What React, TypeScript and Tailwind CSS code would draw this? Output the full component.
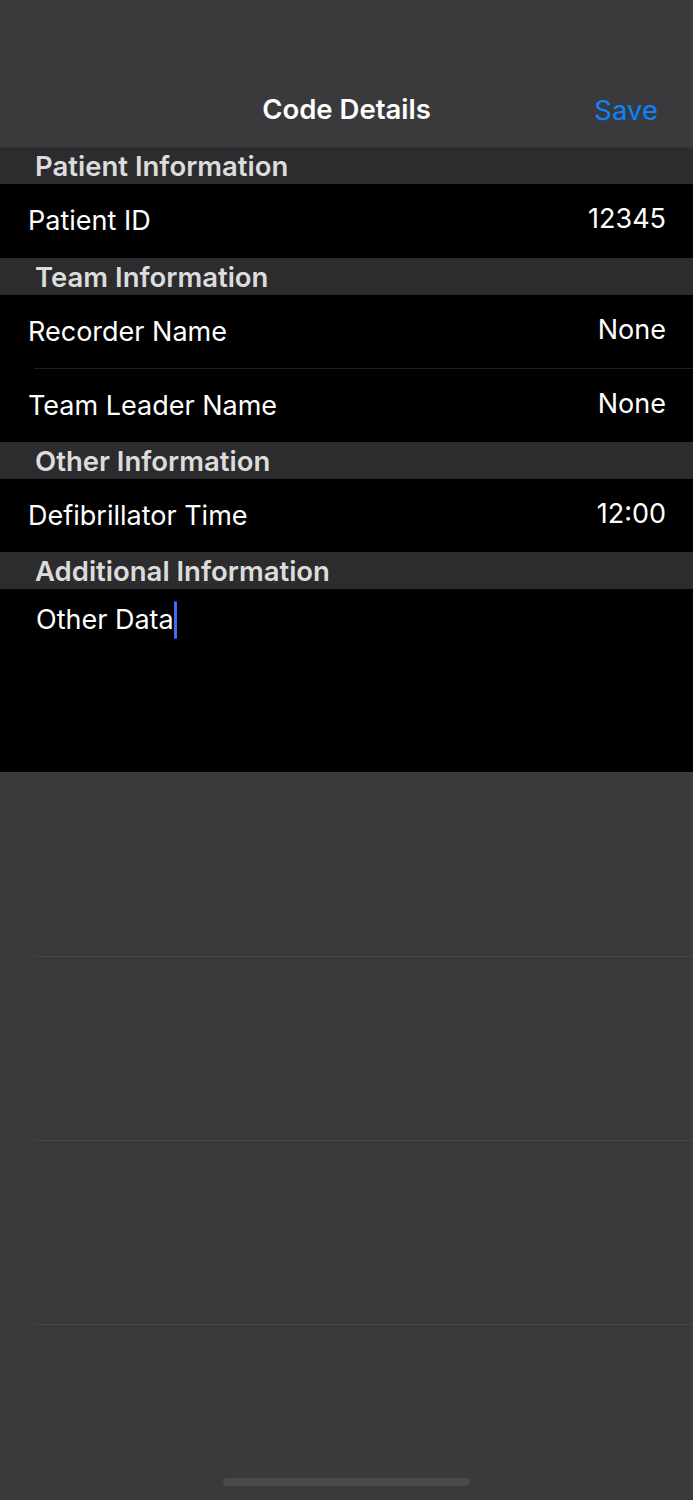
import React from "react";

const font = { fontFamily: "Inter, 'Noto Sans', sans-serif" };

function SectionHeader({ title, h }: { title: string; h: string }) {
  return (
    <div className={`${h} bg-[#2c2c2e] pl-[35px] flex items-center`}>
      <span className="text-[27.5px] font-semibold text-[#dcdcdc] leading-none mt-[2px]">{title}</span>
    </div>
  );
}

function Row({ label, value, sep, h }: { label: string; value: string; sep?: boolean; h: string }) {
  return (
    <div className={`relative ${h} bg-black flex items-center justify-between pl-[28px] pr-[27px]`}>
      <span className="text-[27px] text-white mt-[1px]">{label}</span>
      <span className="text-[27px] text-white -mt-[3px]">{value}</span>
      {sep && <div className="absolute left-[34px] right-0 bottom-0 h-[1px] bg-[#1f1f21]" />}
    </div>
  );
}

export default function App() {
  return (
    <div className="w-[693px] h-[1500px] bg-[#3a3a3c] flex flex-col overflow-hidden relative" style={font}>
      <div className="h-[148px] bg-[#3a3a3c] border-b border-[#333335] flex items-end pb-[17px] relative">
        <div className="w-full text-center text-[27.5px] font-semibold text-white">Code Details</div>
        <div className="absolute right-[35px] bottom-[16px] text-[27.5px] text-[#0a84ff]">Save</div>
      </div>
      <SectionHeader title="Patient Information" h="h-[36px]" />
      <Row label="Patient ID" value="12345" h="h-[74px]" />
      <SectionHeader title="Team Information" h="h-[37px]" />
      <Row label="Recorder Name" value="None" sep h="h-[74px]" />
      <Row label="Team Leader Name" value="None" h="h-[73px]" />
      <SectionHeader title="Other Information" h="h-[37px]" />
      <Row label="Defibrillator Time" value="12:00" h="h-[73px]" />
      <SectionHeader title="Additional Information" h="h-[37px]" />
      <div className="h-[183px] bg-black pl-[36px] pt-[11px]">
        <div className="flex items-center text-[27px] text-white">
          <span>Other Data</span>
          <span className="inline-block w-[3px] h-[38px] bg-[#3f6df5] rounded-sm" />
        </div>
      </div>
      <div className="flex flex-col">
        <div className="h-[185px] border-b border-[#464648] ml-[34px]" />
        <div className="h-[184px] border-b border-[#464648] ml-[34px]" />
        <div className="h-[184px] border-b border-[#464648] ml-[34px]" />
      </div>
      <div className="absolute left-[223px] top-[1478px] w-[247px] h-[8px] rounded-full bg-[#4a4a4c]" />
    </div>
  );
}
